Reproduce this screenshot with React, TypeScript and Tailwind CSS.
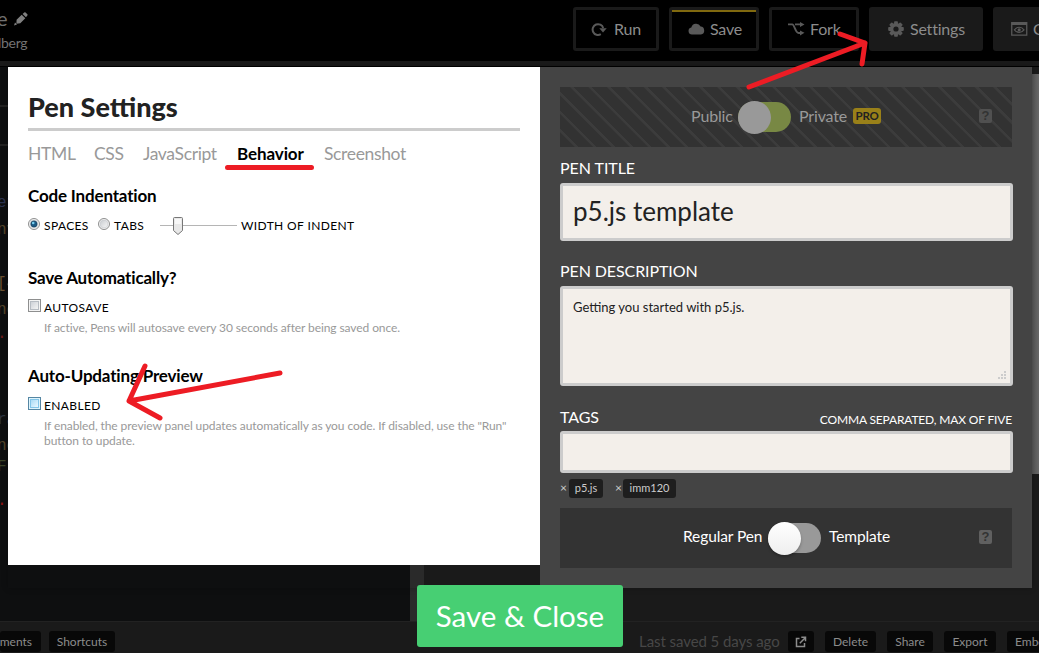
import React from "react";

const tabs = ["HTML", "CSS", "JavaScript", "Behavior", "Screenshot"];
const tabWidths = ["w-[66px]", "w-[49px]", "w-[94px]", "w-[87px]", "w-[90px]"];

const codeBits = [
  { t: "et", c: "text-[#2b3350]", m: "h-[27px]" },
  { t: "nv", c: "text-[#55452a]", m: "h-[54px]" },
  { t: "[4", c: "text-[#6a5030]", m: "h-[26px]" },
  { t: "nc", c: "text-[#55452a]", m: "h-[27px]" },
  { t: "·;", c: "text-[#701c1c]", m: "h-[83px]" },
  { t: "ra", c: "text-[#2c3440]", m: "h-[26px]" },
  { t: "nc", c: "text-[#55452a]", m: "h-[21px]" },
  { t: "F-", c: "text-[#3b4428]", m: "h-[37px]" },
  { t: "·", c: "text-[#901414]", m: "h-[27px]" },
];

function RunIcon() {
  return (
    <svg width="16" height="14" viewBox="0 0 16 14" className="shrink-0">
      <path d="M9.8 12.2A5.4 5.4 0 1 1 12.2 6" fill="none" stroke="#595959" strokeWidth="2" />
      <path d="M8.3 6.2h7.4L12 10.6z" fill="#595959" />
    </svg>
  );
}

function CloudIcon() {
  return (
    <svg width="17" height="12" viewBox="0 0 17 12" className="shrink-0">
      <path d="M4 11.5a3.6 3.6 0 0 1-.7-7.1A5 5 0 0 1 12.6 3.6 4 4 0 0 1 13 11.5z" fill="#595959" />
    </svg>
  );
}

function ForkIcon() {
  return (
    <svg width="17" height="14" viewBox="0 0 17 14" className="shrink-0">
      <path d="M0 2.4h4.2c2.4 0 3 8.6 6.4 8.6H13M7 2.4h6" fill="none" stroke="#595959" strokeWidth="1.9" />
      <path d="M12 0l4.500 2.400L12 5zM12 8.400l4.500 2.400L12 13.600z" fill="#595959" />
    </svg>
  );
}

function GearIcon() {
  return (
    <svg width="16" height="16" viewBox="0 0 16 16" className="shrink-0">
      <g fill="#595959">
        {[0, 45, 90, 135].map((a) => (
          <rect key={a} x="6.1" y="0.2" width="3.8" height="15.6" rx="0.8" transform={`rotate(${a} 8 8)`} />
        ))}
        <circle cx="8" cy="8" r="6" />
      </g>
      <circle cx="8" cy="8" r="2.6" fill="#1a1a1a" />
    </svg>
  );
}

function ViewIcon() {
  return (
    <svg width="17" height="14" viewBox="0 0 17 14" className="shrink-0">
      <path d="M.75.75h15v12.400h-15z" fill="none" stroke="#595959" strokeWidth="1.3" />
      <path d="M.5 1.800h15.500" stroke="#595959" strokeWidth="2.4" />
      <path d="M3.400 7.800c2.600-3.400 7-3.400 9.600 0-2.600 3.400-7 3.400-9.600 0z" fill="none" stroke="#595959" strokeWidth="1.2" />
      <circle cx="8.2" cy="7.8" r="1.6" fill="#595959" />
    </svg>
  );
}

function Header() {
  const b = "flex h-[44px] shrink-0 items-center rounded-[3px] text-[16px] tracking-[-0.2px] text-[#8c8c8c]";
  return (
    <header className="flex h-[61px] shrink-0 justify-between bg-black">
      <div className="w-[60px]">
        <div className="flex h-[35px] items-start">
          <span className="-ml-[3px] h-[35px] w-[10px] text-[20px] leading-[37px] text-[#707070]">e</span>
          <svg width="14" height="14" viewBox="0 0 14 14" className="mt-[12px] ml-[7px]">
            <path d="M2.600 7.700l5.100-5 3.600 3.600-5 5-3.900.5zM8.600 1.900L10.200.5q.7-.6 1.400 0l1.700 1.700q.7.7 0 1.400L12 5.200z" fill="#808080" />
            <path d="M0 13.500l1-2.900 2 2z" fill="#808080" />
          </svg>
        </div>
        <div className="-ml-[2px] text-[14px] leading-[16px] tracking-[-0.3px] text-[#737373]">lberg</div>
      </div>
      <div className="flex w-[466px] shrink-0 overflow-hidden pt-[7px]">
        <div className={`${b} w-[86px] border-[3px] border-[#1a1a1a] pl-[15px]`}>
          <RunIcon /><span className="ml-[7px]">Run</span>
        </div>
        <div className={`${b} ml-[10px] w-[90px] border-[3px] border-[#1a1a1a]`}>
          <div className="flex h-full w-full items-center border-t-2 border-[#80690f] pb-[2px] pl-[16px]">
            <CloudIcon /><span className="ml-[5px]">Save</span>
          </div>
        </div>
        <div className={`${b} ml-[10px] w-[90px] border-[3px] border-[#1a1a1a] pl-[16px]`}>
          <ForkIcon /><span className="ml-[5px]">Fork</span>
        </div>
        <div className={`${b} ml-[10px] w-[114px] bg-[#1a1a1a] pl-[19px]`}>
          <GearIcon /><span className="ml-[6px]">Settings</span>
        </div>
        <div className={`${b} ml-[10px] w-[120px] bg-[#1a1a1a] pl-[18px]`}>
          <ViewIcon /><span className="ml-[5px] whitespace-nowrap">Change View</span>
        </div>
      </div>
    </header>
  );
}

function Footer() {
  const b = "flex h-[21px] shrink-0 items-center rounded-[3px] bg-[#080808] text-[12px] leading-[21px] text-[#8c8c8c]";
  return (
    <footer className="flex h-[32px] shrink-0 border-t border-[#222] bg-[#1a1a1a] pt-[9px]">
      <div className={`${b} w-[41px] justify-end overflow-hidden pr-[9px]`}>mments</div>
      <div className={`${b} ml-[8px] w-[66px] justify-center`}>Shortcuts</div>
      <div className="ml-[524px] w-[149px] shrink-0 text-[15px] leading-[20px] tracking-[-0.07px] whitespace-nowrap text-[#474747]">Last saved 5 days ago</div>
      <div className={`${b} w-[26px] justify-center`}>
        <svg width="12" height="12" viewBox="0 0 12 12" fill="none" stroke="#8c8c8c" strokeWidth="1.5">
          <path d="M4.500 2.500H1.500v8h8V7M4.800 7.200L10 2M6.300 1.300h4.200v4" />
        </svg>
      </div>
      <div className={`${b} ml-[11px] w-[51px] justify-center`}>Delete</div>
      <div className={`${b} ml-[11px] w-[46px] justify-center`}>Share</div>
      <div className={`${b} ml-[11px] w-[52px] justify-center`}>Export</div>
      <div className={`${b} ml-[11px] w-[56px] pl-[8px]`}>Embed</div>
    </footer>
  );
}

function Radio({ on }: { on?: boolean }) {
  return (
    <svg width="12" height="12" viewBox="0 0 12 12" className="shrink-0">
      <defs>
        <linearGradient id="rg" x1="0" y1="0" x2="1" y2="1">
          <stop offset="0" stopColor="#c8ccd0" /><stop offset="1" stopColor="#f8f8f8" />
        </linearGradient>
      </defs>
      <circle cx="6" cy="6" r="5.5" fill="#f4f4f4" stroke="#8e8f8f" />
      <circle cx="6" cy="6" r="3.9" fill="url(#rg)" stroke="#c4c8cc" strokeWidth=".6" />
      {on && <circle cx="6" cy="6" r="3.1" fill="#1c5a85" stroke="#113d5c" strokeWidth=".7" />}
      {on && <circle cx="5.2" cy="5" r="1.3" fill="#76cdee" />}
    </svg>
  );
}

function Check({ blue }: { blue?: boolean }) {
  return (
    <span className={`h-[13px] w-[13px] shrink-0 border p-px ${blue ? "border-[#5586a3] bg-[#def4fc]" : "border-[#8e8f8f] bg-[#f4f4f4]"}`}>
      <span className={`block h-[9px] w-[9px] border bg-gradient-to-br ${blue ? "border-[#83c5e8] from-[#a9dbf5] to-[#eaf8ff]" : "border-[#b7bcc3] from-[#ced2d8] to-[#f4f4f4]"}`} />
    </span>
  );
}

function LeftPanel() {
  const h2 = "h-[24px] text-[17px] leading-[24px] font-bold tracking-[-0.17px]";
  const caps = "flex text-[12px] tracking-[0.38px]";
  const note = "mt-[3px] ml-[16px] text-[12px] leading-[15px] tracking-[-0.09px] whitespace-nowrap text-[#999]";
  return (
    <section className="h-[498px] w-[532px] shrink-0 bg-white px-[20px] pt-[23px] text-black">
      <h1 className="h-[41px] w-[492px] border-b-[3px] border-[#ccc] text-[27px] leading-[33px] font-black text-[#222]">Pen Settings</h1>
      <nav className="mt-[11px] flex h-[24px] text-[17.500px] leading-[23px] tracking-[-0.35px] text-[#999]">
        {tabs.map((t, i) => (
          <span key={t} className={`shrink-0 ${tabWidths[i]} ${t === "Behavior" ? "text-[17px] font-bold tracking-[-0.1px] text-black" : ""}`}>{t}</span>
        ))}
      </nav>
      <h2 className={`${h2} mt-[18px]`}>Code Indentation</h2>
      <div className={`${caps} mt-[8px] h-[20px] leading-[20px]`}>
        <span className="flex w-[70px] gap-[4px]"><span className="pt-[2px]"><Radio on /></span>SPACES</span>
        <span className="flex w-[62px] gap-[4px]"><span className="pt-[2px]"><Radio /></span>TABS</span>
        <svg width="77" height="20" viewBox="0 0 77 20" className="mr-[4px] shrink-0">
          <path d="M0 9.500h77" stroke="#b5b5b5" />
          <path d="M13.500 2.500q0-1 1-1h7q1 0 1 1v12l-4.500 4-4.500-4z" fill="#e8e8e8" stroke="#777" />
          <path d="M15 3h6v5h-6z" fill="#f8f8f8" />
        </svg>
        <span className="whitespace-nowrap">WIDTH OF INDENT</span>
      </div>
      <h2 className={`${h2} mt-[30px]`}>Save Automatically?</h2>
      <div className={`${caps} mt-[9px] h-[18px] gap-[3px] leading-[18px]`}><Check />AUTOSAVE</div>
      <p className={`${note} h-[16px]`}>If active, Pens will autosave every 30 seconds after being saved once.</p>
      <h2 className={`${h2} mt-[28px]`}>Auto-Updating Preview</h2>
      <div className={`${caps} mt-[9px] h-[18px] gap-[3px] leading-[18px]`}><Check blue />ENABLED</div>
      <p className={note}>If enabled, the preview panel updates automatically as you code. If disabled, use the "Run"<br />button to update.</p>
    </section>
  );
}

function Help({ dim }: { dim?: boolean }) {
  return (
    <span className={`flex h-[14px] w-[13px] shrink-0 items-center justify-center rounded-[2px] font-['Liberation_Sans'] text-[13px] leading-[14px] font-bold text-[#333] ${dim ? "bg-[#505050]" : "bg-[#606060]"}`}>?</span>
  );
}

function RightPanel() {
  const field = "w-[453px] shrink-0 rounded-[3px] border-[3px] border-[#ccc] bg-[#f3efea] text-[#222]";
  return (
    <section className="flex h-[521px] w-[492px] shrink-0 flex-col bg-[#444] pt-[20px] pl-[20px] text-white">
      <div className="flex h-[60px] w-[452px] shrink-0 bg-[#323232] bg-[repeating-linear-gradient(45deg,#323232_0px,#323232_10px,#3c3c3c_11px,#3c3c3c_13px)] pl-[131px] text-[16px] tracking-[-0.15px] text-[#999]">
        <span className="w-[47px] leading-[57px]">Public</span>
        <span className="mt-[15px] flex h-[30px] w-[53px] items-center rounded-full bg-[#788844]"><span className="-my-[2px] h-[33px] w-[33px] rounded-full bg-[#999]" /></span>
        <span className="ml-[8px] w-[54px] leading-[57px]">Private</span>
        <span className="mt-[21px] flex h-[16px] w-[28px] items-center justify-center rounded-[3px] bg-[#998019] text-[11.500px] font-bold tracking-[-0.3px] text-[#222]">PRO</span>
        <span className="mt-[22px] ml-[98px]"><Help dim /></span>
      </div>
      <label className="mt-[11px] h-[20px] text-[16px] leading-[20px] tracking-[-0.05px]">PEN TITLE</label>
      <div className={`${field} mt-[5px] h-[58px] pl-[10px] text-[26px] leading-[51px]`}>p5.js template</div>
      <label className="mt-[20px] h-[20px] text-[16px] leading-[20px] tracking-[-0.1px]">PEN DESCRIPTION</label>
      <div className={`${field} mt-[5px] flex h-[100px] items-start justify-between pl-[10px] text-[13px]`}>
        <span className="pt-[9px] leading-[18px]">Getting you started with p5.js.</span>
        <svg width="10" height="10" viewBox="0 0 10 10" className="mr-[2px] mb-[2px] self-end">
          <path d="M6 0h2v2H6zM3 3h2v2H3zM6 3h2v2H6zM0 6h2v2H0zM3 6h2v2H3zM6 6h2v2H6z" fill="#ccc" />
        </svg>
      </div>
      <div className="mt-[22px] flex h-[20px] w-[452px] justify-between">
        <span className="text-[16px] leading-[18px] tracking-[-0.1px]">TAGS</span>
        <span className="text-[12px] leading-[24px] tracking-[-0.16px]">COMMA SEPARATED, MAX OF FIVE</span>
      </div>
      <div className={`${field} mt-[3px] h-[42px]`} />
      <div className="mt-[6px] flex h-[19px] text-[11px] leading-[18px] text-[#ccc]">
        <span className="w-[9px] text-[12px]">×</span>
        <span className="w-[34px] rounded-[3px] bg-[#1e1e1e] text-center">p5.js</span>
        <span className="ml-[12px] w-[8px] text-[12px]">×</span>
        <span className="w-[53px] rounded-[3px] bg-[#1e1e1e] text-center">imm120</span>
      </div>
      <div className="mt-[10px] flex h-[60px] w-[452px] shrink-0 bg-[#333] pl-[123px] text-[15.500px] tracking-[-0.1px]">
        <span className="w-[85px] leading-[57px] whitespace-nowrap">Regular Pen</span>
        <span className="mt-[15px] flex h-[30px] w-[53px] items-center rounded-full bg-[#999]"><span className="-my-[2px] h-[33px] w-[33px] rounded-full bg-gradient-to-b from-white to-[#eee] shadow-[0_2px_3px_rgba(0,0,0,0.25)]" /></span>
        <span className="ml-[8px] w-[150px] leading-[57px]">Template</span>
        <span className="mt-[22px]"><Help /></span>
      </div>
    </section>
  );
}

export default function App() {
  return (
    <div className="relative flex h-[653px] w-[1039px] flex-col overflow-hidden bg-[#1a1a1a] font-['Lato',sans-serif]">
      <Header />
      <div className="h-[6px] shrink-0 border-b border-black bg-[#1a1a1a]" />
      <main className="flex h-[554px] shrink-0">
        <div className="w-[410px] bg-[#0e0f10]">
          <div className="h-[40px] w-[8px] border-b-2 border-[#222]" />
          <div className="h-[39px] w-[8px] border-b-2 border-[#222]" />
          <div className="mt-[48px] w-[8px] overflow-hidden font-['Liberation_Mono'] text-[16px] leading-[18px]">
            {codeBits.map((b, i) => (
              <div key={i} className={`${b.c} ${b.m}`}><span className="-ml-[3px]">{b.t}</span></div>
            ))}
          </div>
        </div>
        <div className="w-[14px] bg-[#2a2a2a]" />
        <div className="grow" />
        <div className="mt-[7px] h-[400px] w-[7px] bg-gradient-to-r from-[#555] to-[#686868]" />
      </main>
      <Footer />
      <div className="absolute top-[67px] left-[8px] flex items-start shadow-[0_0_6px_rgba(0,0,0,0.25)]">
        <LeftPanel />
        <RightPanel />
      </div>
      <button className="absolute top-[585px] left-[417px] h-[62px] w-[206px] rounded-[3px] bg-[#47cf73] text-[29.500px] leading-[62px] text-white">Save &amp; Close</button>
      <svg width="1039" height="653" className="pointer-events-none absolute inset-0" fill="none" stroke="#ed1c24" strokeWidth="5" strokeLinecap="round" strokeLinejoin="round">
        <path d="M227.500 167.500H311.500M749 87L865 43M840 34L865 43L862 64M280 373L129 401M145 366L129 401L160 418" />
      </svg>
    </div>
  );
}
